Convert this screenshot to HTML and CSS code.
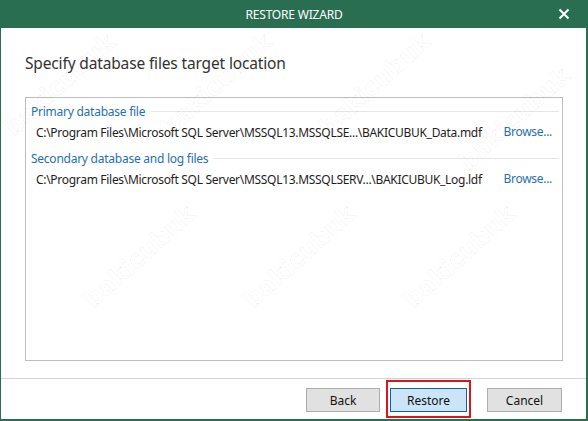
FILE: index.html
```html
<!DOCTYPE html>
<html>
<head>
<meta charset="utf-8">
<link rel="stylesheet" href="styles.css">
</head>
<body>
<div class="window">
  <div class="titlebar">
    <span class="title">RESTORE WIZARD</span>
    <span class="close">
      <svg width="12" height="12" viewBox="0 0 12 12"><path d="M1.5 1.5 L10.5 10.5 M10.5 1.5 L1.5 10.5" stroke="#fff" stroke-width="2" fill="none"/></svg>
    </span>
  </div>
  <div class="content">
    <h1 class="heading">Specify database files target location</h1>
    <div class="box">
      <div class="group">
        <div class="label"><span>Primary database file</span><i class="rule"></i></div>
        <div class="row">
          <span class="path">C:\Program Files\Microsoft SQL Server\MSSQL13.MSSQLSE...\BAKICUBUK_Data.mdf</span>
          <span class="browse">Browse...</span>
        </div>
      </div>
      <div class="group">
        <div class="label"><span>Secondary database and log files</span><i class="rule"></i></div>
        <div class="row">
          <span class="path">C:\Program Files\Microsoft SQL Server\MSSQL13.MSSQLSERV...\BAKICUBUK_Log.ldf</span>
          <span class="browse">Browse...</span>
        </div>
      </div>
    </div>
  </div>
  <div class="footer">
    <button class="btn">Back</button>
    <span class="focus-wrap"><button class="btn btn-primary">Restore</button><i class="highlight"></i></span>
    <button class="btn btn-cancel">Cancel</button>
  </div>
  <div class="watermarks">
    <span class="wm wm1">bakicubuk</span>
    <span class="wm wm2">bakicubuk</span>
    <span class="wm wm3">bakicubuk</span>
    <span class="wm wm4">bakicubuk</span>
    <span class="wm wm5">bakicubuk</span>
    <span class="wm wm6">bakicubuk</span>
    <span class="wm wm7">bakicubuk</span>
  </div>
</div>
</body>
</html>
```
FILE: styles.css
```css
* { box-sizing: border-box; }
html, body { margin: 0; padding: 0; background: #fff; }
body { font-family: "Noto Sans", "Open Sans", "DejaVu Sans", sans-serif; }

.window {
  position: relative;
  width: 588px;
  height: 421px;
  display: flex;
  flex-direction: column;
  border-left: 1px solid #2a6e51;
  border-right: 2px solid #2a6e51;
  border-bottom: 2px solid #2a6e51;
  background: #fff;
  overflow: hidden;
}

.titlebar {
  height: 28px;
  margin-left: -1px;
  margin-right: -2px;
  background: #2a6e51;
  color: #fff;
  display: flex;
  align-items: center;
  justify-content: center;
  position: relative;
  flex: none;
}
.title { font-size: 12px; letter-spacing: -0.2px; }
.close {
  position: absolute;
  right: 18px;
  top: 8px;
  width: 12px;
  height: 12px;
  display: block;
}
.close svg { display: block; }

.content {
  flex: 1;
  padding: 24px 23px 0 24px;
  display: flex;
  flex-direction: column;
}
.heading {
  margin: 0;
  font-size: 15.5px;
  font-weight: normal;
  color: #333;
  line-height: 22px;
  letter-spacing: -0.15px;
}
.box {
  margin-top: 23px;
  height: 264px;
  border: 1px solid #bdbdbd;
  padding: 5px 10px 0 5px;
}
.group + .group { margin-top: 7px; }
.label {
  display: flex;
  align-items: center;
  height: 16px;
  color: #2570b5;
  font-size: 12px;
  letter-spacing: -0.25px;
}
.rule {
  flex: 1;
  height: 1px;
  background: #e6e6e6;
  margin-left: 6px;
  margin-right: -7px;
}
.row {
  display: flex;
  align-items: center;
  justify-content: space-between;
  height: 22px;
  margin-top: 2px;
  padding-left: 5px;
  font-size: 12px;
  letter-spacing: -0.3px;
}
.path { color: #1e1e1e; }
.browse { color: #2570b5; margin-top: -2px; }

.footer {
  flex: none;
  height: 41px;
  margin-top: 16px;
  border-top: 1px solid #d4d4d4;
  display: flex;
  align-items: flex-start;
  justify-content: flex-end;
  padding: 9px 24px 0 0;
}
.btn {
  width: 74px;
  height: 24px;
  border: 1px solid #adadad;
  background: #e1e1e1;
  font-family: "Noto Sans", "Open Sans", sans-serif;
  font-size: 12px;
  color: #111;
  padding: 0;
  margin: 0;
}
.focus-wrap {
  position: relative;
  display: block;
  margin-left: 10px;
  margin-right: 20px;
}
.btn-primary {
  display: block;
  width: 77px;
  background: #cce4f7;
  border-color: #1a5e9a;
}
.btn-cancel { width: 75px; }
.highlight {
  position: absolute;
  left: -4px;
  right: -4px;
  top: -8px;
  bottom: -6px;
  border: 2px solid #e0141b;
}

.watermarks {
  position: absolute;
  inset: 0;
  pointer-events: none;
}
.wm {
  position: absolute;
  font-family: "DejaVu Sans", sans-serif;
  font-weight: bold;
  font-size: 24px;
  line-height: 24px;
  color: rgba(255, 255, 255, 0);
  -webkit-text-stroke: 0.7px rgba(0, 0, 0, 0.07);
  transform: rotate(-42deg);
  transform-origin: 0 100%;
  white-space: nowrap;
}
.wm1 { left: 15px; top: 116px; }
.wm2 { left: 172px; top: 116px; }
.wm3 { left: 330px; top: 116px; }
.wm4 { left: 470px; top: 150px; }
.wm5 { left: 95px; top: 288px; }
.wm6 { left: 255px; top: 288px; }
.wm7 { left: 415px; top: 288px; }
```
